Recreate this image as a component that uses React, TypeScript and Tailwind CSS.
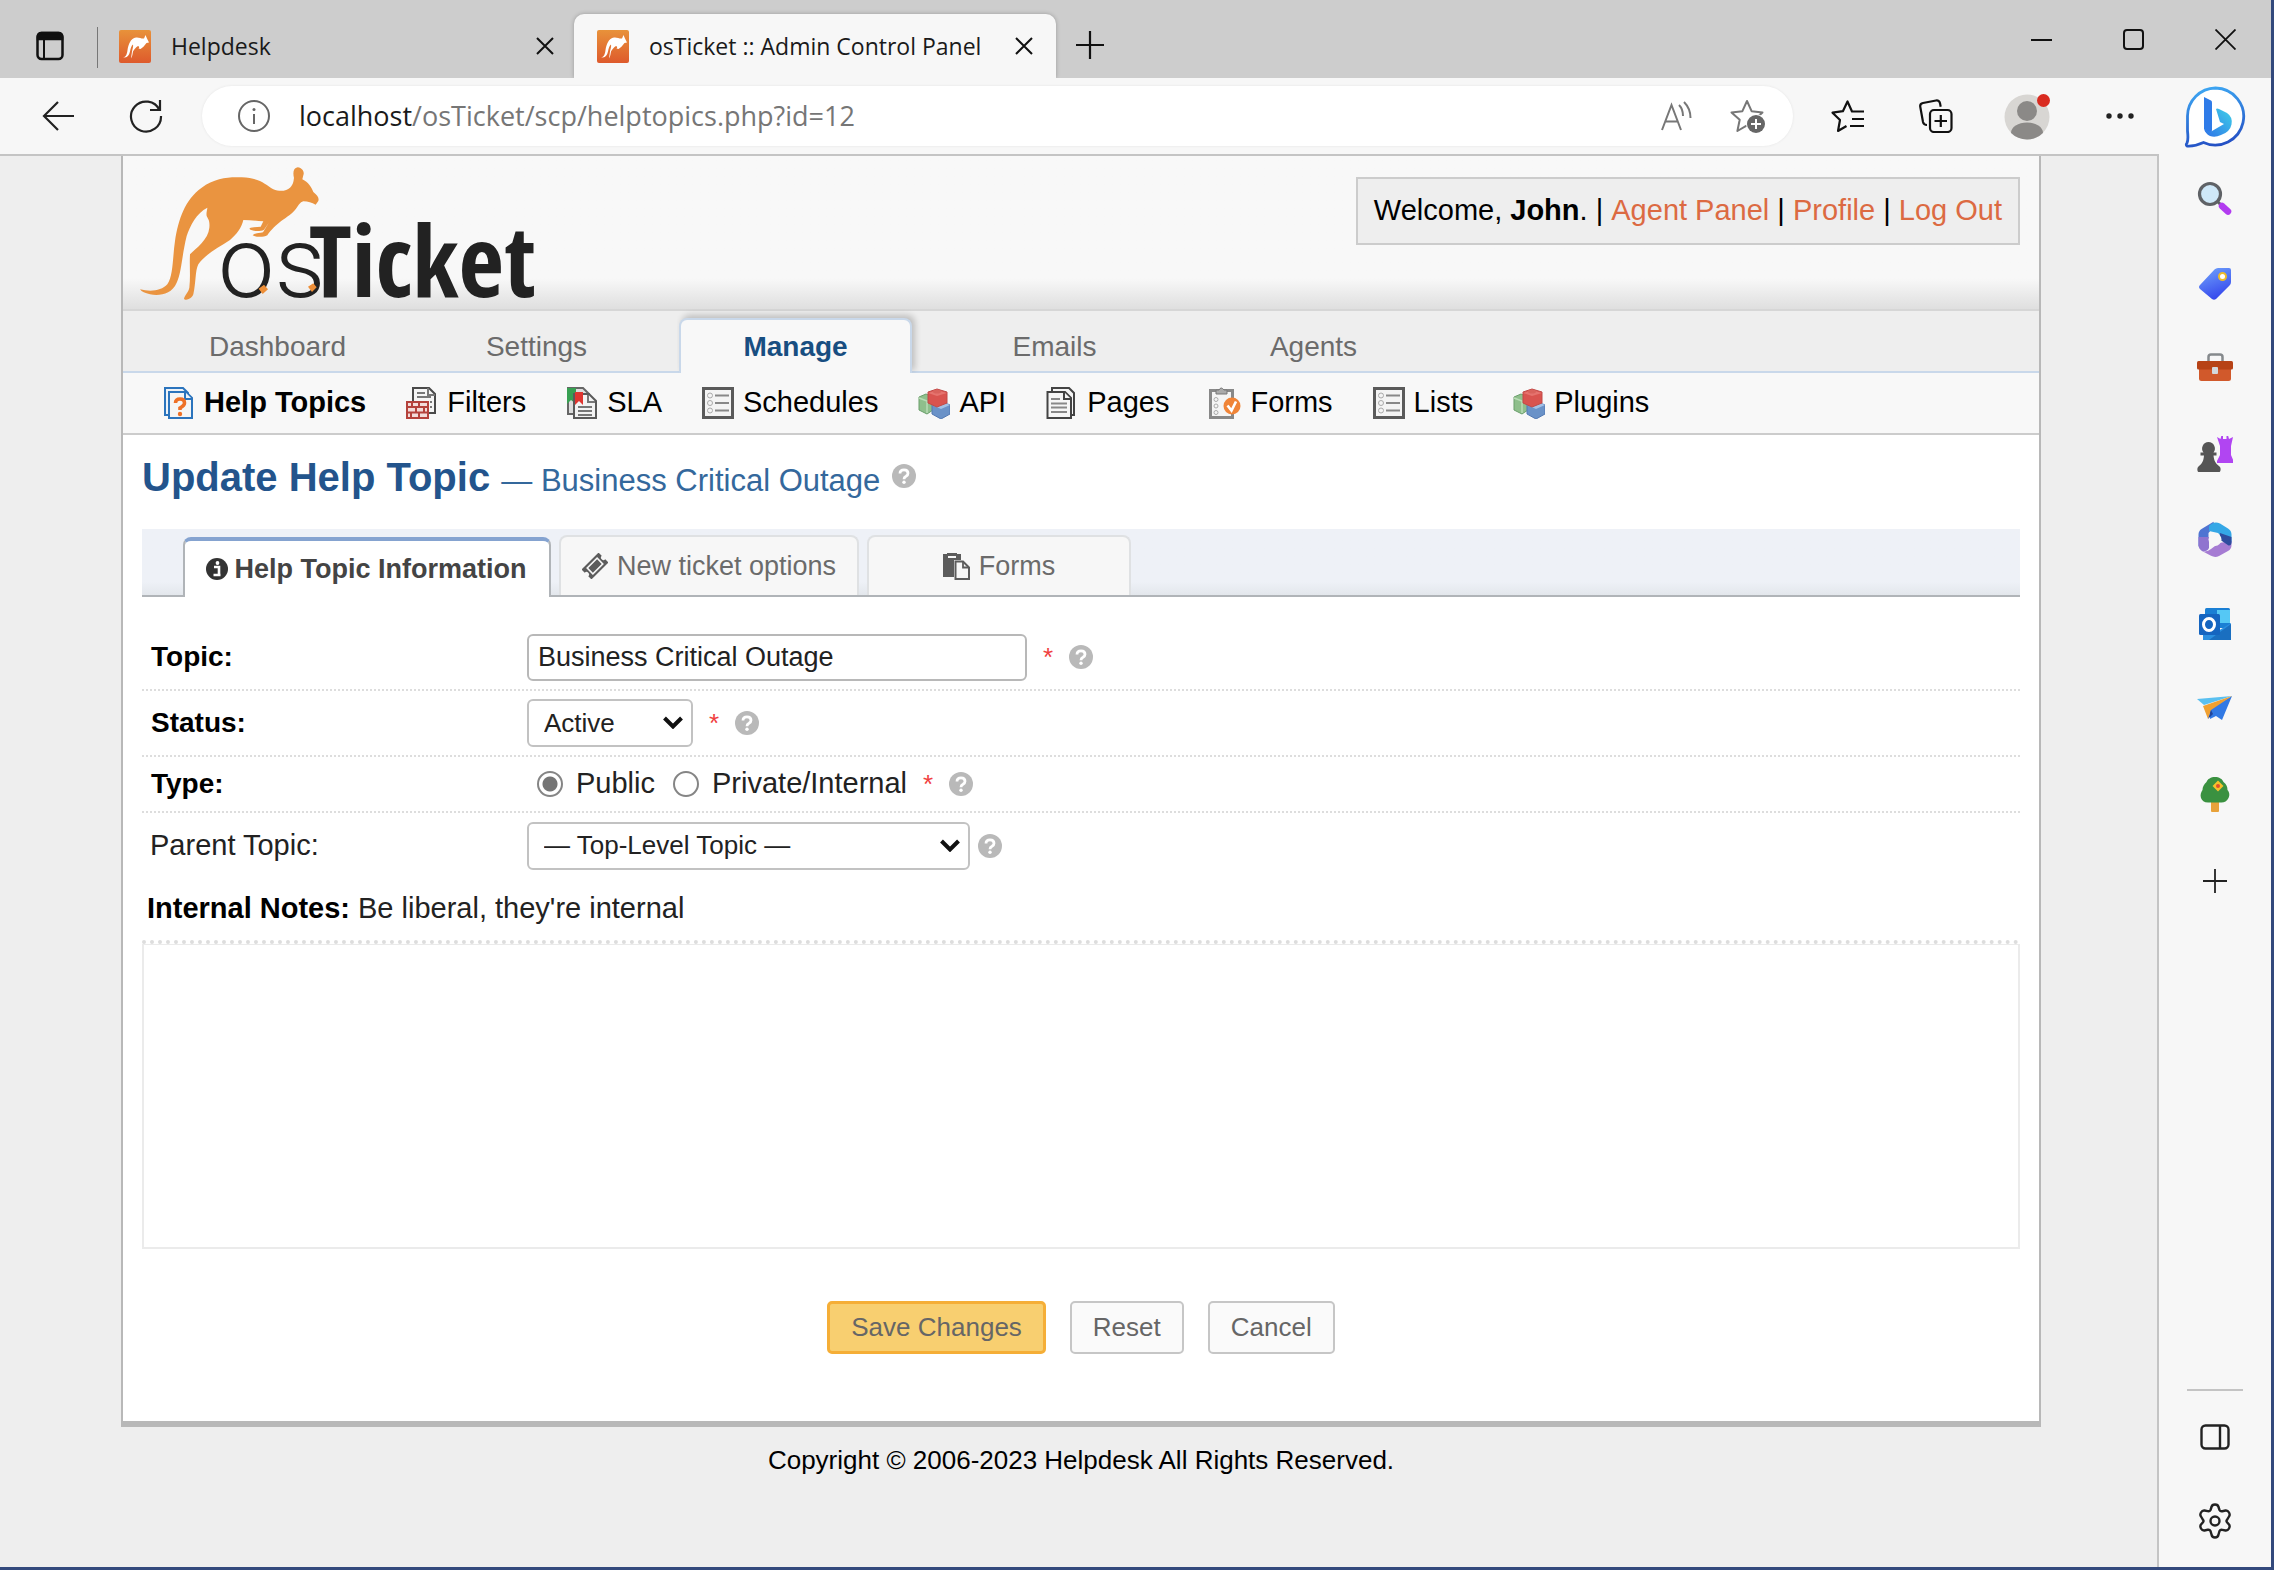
import React from "react";

const ui = "font-['Open_Sans','Noto_Sans',sans-serif]";

function RooTile() {
  return (
    <svg viewBox="0 0 32 33" className="h-[33px] w-8 shrink-0" aria-hidden="true">
      <defs>
        <linearGradient id="tile" x1="0" y1="0" x2="0" y2="1">
          <stop offset="0" stopColor="#e8923a" />
          <stop offset="1" stopColor="#de5a2c" />
        </linearGradient>
      </defs>
      <rect width="32" height="33" rx="2" fill="url(#tile)" />
      <path
        d="M4 27c3 .5 4-3 4.500-7C9.500 14 11.500 8.500 17 7.500c3-.5 5.500 1.500 8 1L26.500 5l1.500 3.500 2 4-2.500.5c-2 2.500-3.500 4.500-6 6l-2-.5c1-1 1-2-.5-2.500-2 1-4 3.500-5 5.500-.5 2-.5 5-2 7l1-7c.5-3 1.500-5 1-7-1.500 1-2.500 4-3 7C10 26 7.500 28.500 4 27z"
        fill="#fff"
      />
    </svg>
  );
}

function CloseX() {
  return (
    <svg viewBox="0 0 18 18" className="h-[18px] w-[18px]" stroke="#111" strokeWidth="2" fill="none">
      <path d="M1 1l16 16M17 1L1 17" />
    </svg>
  );
}

function TabBar() {
  return (
    <div className={`${ui} flex h-[78px] bg-[#cdcdcd] text-[23px] text-[#1a1a1a]`}>
      <button aria-label="Tab actions" className="mt-[14px] flex h-[64px] w-[97px] items-center pl-9">
        <svg viewBox="0 0 28 30" className="h-[30px] w-7" fill="none" stroke="#111" strokeWidth="2.500">
          <rect x="1.500" y="2" width="25" height="26" rx="4" />
          <path d="M2 5a3 3 0 0 1 3-3h18a3 3 0 0 1 3 3v3H2z" fill="#111" />
          <path d="M8 8v20" strokeWidth="2" />
        </svg>
      </button>
      <div className="mt-[27px] h-[41px] w-px bg-[#777]" />
      <div className="mt-[14px] flex h-[64px] w-[476px] items-center pr-[20px] pl-[21px]">
        <RooTile />
        <span className="ml-5 flex-1">Helpdesk</span>
        <button aria-label="Close tab"><CloseX /></button>
      </div>
      <div className="mt-[14px] flex h-[64px] w-[482px] items-center rounded-t-[10px] bg-[#f7f7f7] pr-[23px] pl-[23px] shadow-[0_0_4px_rgba(0,0,0,0.25)] [clip-path:inset(-6px_-6px_0_-6px)]">
        <RooTile />
        <span className="ml-5 flex-1 whitespace-nowrap">osTicket :: Admin Control Panel</span>
        <button aria-label="Close tab"><CloseX /></button>
      </div>
      <button aria-label="New tab" className="ml-[20px] mt-[14px] flex h-[62px] items-center">
        <svg viewBox="0 0 28 28" className="h-7 w-7" stroke="#111" strokeWidth="2.200"><path d="M14 0v28M0 14h28" /></svg>
      </button>
      <div className="ml-auto flex h-[78px] items-center gap-[71px] pr-[35px]">
        <button aria-label="Minimize"><svg viewBox="0 0 21 21" className="h-[21px] w-[21px]" stroke="#111" strokeWidth="2"><path d="M0 11h21" /></svg></button>
        <button aria-label="Maximize"><svg viewBox="0 0 21 21" className="h-[21px] w-[21px]" stroke="#111" strokeWidth="2" fill="none"><rect x="1" y="1" width="19" height="19" rx="3" /></svg></button>
        <button aria-label="Close window"><svg viewBox="0 0 21 21" className="h-[21px] w-[21px]" stroke="#111" strokeWidth="1.800"><path d="M.5.5l20 20M20.500.5l-20 20" /></svg></button>
      </div>
    </div>
  );
}

const STAR = "M17 2l4.600 10.200 10.900 1.200-8.200 7.400L26.600 32 17 26.300 7.400 32l2.300-11.200-8.200-7.400 10.900-1.200z";

function Toolbar() {
  return (
    <div className={`${ui} flex h-[78px] items-center border-b-2 border-[#c4c4c4] bg-[#f7f7f7] pl-[42px]`}>
      <button aria-label="Back">
        <svg viewBox="0 0 32 30" className="h-[30px] w-8" fill="none" stroke="#222" strokeWidth="2.200"><path d="M32 15H2M16 1L2 15l14 14" /></svg>
      </button>
      <button aria-label="Refresh" className="ml-[55px]">
        <svg viewBox="0 0 34 34" className="h-[34px] w-[34px]" fill="none" stroke="#222" strokeWidth="2.200">
          <path d="M30.500 11A15 15 0 1 0 32 17M31 1v10H21" />
        </svg>
      </button>
      <div className="ml-[39px] flex h-[60px] flex-1 items-center rounded-full bg-white pr-[27px] pl-[36px] shadow-[0_0_3px_rgba(0,0,0,0.08)]">
        <svg viewBox="0 0 32 32" className="h-8 w-8" fill="none" stroke="#666" strokeWidth="2">
          <circle cx="16" cy="16" r="15" /><path d="M16 14v10" /><circle cx="16" cy="9.500" r="1.500" fill="#666" stroke="none" />
        </svg>
        <span className="ml-[29px] flex-1 text-[27px] text-[#767676]">
          <span className="text-[#1a1a1a]">localhost</span>/osTicket/scp/helptopics.php?id=12
        </span>
        <button aria-label="Read aloud">
          <svg viewBox="0 0 31 30" className="h-[30px] w-[31px]" fill="none" stroke="#777" strokeWidth="2">
            <path d="M1 29L10.500 4 20 29M4.500 20.500h12M18 4c3 3 4 7 4 11M23 1c4 4 6.500 9 6.500 16" />
          </svg>
        </button>
        <button aria-label="Add to favorites" className="ml-[38px]">
          <svg viewBox="0 0 36 34" className="h-[34px] w-9">
            <path d={STAR} fill="none" stroke="#777" strokeWidth="2" strokeLinejoin="round" />
            <circle cx="26" cy="25" r="10" fill="#fff" /><circle cx="26" cy="25" r="9" fill="#666" />
            <path d="M26 20v10M21 25h10" stroke="#fff" strokeWidth="2" />
          </svg>
        </button>
      </div>
      <button aria-label="Favorites" className="ml-[38px]">
        <svg viewBox="0 0 34 34" className="h-[34px] w-[34px]" fill="none" stroke="#111" strokeWidth="2.200" strokeLinejoin="round">
          <path d="M33 12.500H21L16.500 2.500l-4.600 9.700-10.400 1.500 7.500 7.300L7 32l8.500-5M21 20h12M19 27h14" />
        </svg>
      </button>
      <button aria-label="Collections" className="ml-[54px]">
        <svg viewBox="0 0 34 34" className="h-[34px] w-[34px]" fill="none" stroke="#111" strokeWidth="2.200">
          <path d="M8 26c-2.500 0-3.500-1-4-3L1.300 8c-.4-2 .7-3.600 2.700-4l13-2.500c2-.4 3.600.7 4 2.700l.7 3.500" />
          <rect x="11" y="11" width="21.500" height="22" rx="4" /><path d="M21.800 16v12M15.500 22h12.500" />
        </svg>
      </button>
      <button aria-label="Profile" className="ml-[51px]">
        <svg viewBox="0 0 48 48" className="h-12 w-12">
          <clipPath id="av"><circle cx="23" cy="25" r="22.500" /></clipPath>
          <g clipPath="url(#av)">
            <rect width="48" height="48" fill="#d8d6d3" /><circle cx="23" cy="19" r="10" fill="#8b8987" /><ellipse cx="23" cy="41" rx="16" ry="10.500" fill="#8b8987" />
          </g>
          <circle cx="39.500" cy="8.500" r="6.500" fill="#d92b20" />
        </svg>
      </button>
      <button aria-label="Settings and more" className="mr-[25px] ml-[54px]">
        <svg viewBox="0 0 28 6" className="h-[6px] w-7" fill="#222"><circle cx="3" cy="3" r="2.700" /><circle cx="14" cy="3" r="2.700" /><circle cx="25" cy="3" r="2.700" /></svg>
      </button>
    </div>
  );
}

const sideIcons: { name: string; art: React.ReactNode }[] = [
  { name: "Search", art: (<>
    <circle cx="13" cy="13" r="10.500" fill="#cfe8f8" stroke="#5f6266" strokeWidth="3.200" />
    <path d="M20.500 20.500l4 4" stroke="#5f6266" strokeWidth="3" /><path d="M25 25l6 5.500" stroke="#b23cf0" strokeWidth="6.500" strokeLinecap="round" />
  </>) },
  { name: "Shopping", art: (<>
    <path d="M3 19L17.500 3.500Q19 2 21 2h11q2 0 2 2v12q0 2-1.500 3.500L19 33q-2 1.500-4 0L3 23q-2-2 0-4z" fill="url(#tagFill)" />
    <circle cx="25.500" cy="10.500" r="3.500" fill="#fff" stroke="#edbb2c" strokeWidth="2" />
  </>) },
  { name: "Tools", art: (<>
    <path d="M11.500 11V6q0-2.500 2.500-2.500h9Q25.500 3.500 25.500 6v5" fill="none" stroke="#85898c" strokeWidth="2.500" />
    <rect x="2" y="12" width="32" height="18" rx="2.500" fill="#d1592b" /><rect y="10" width="36" height="8.500" rx="1.500" fill="#b74316" />
    <rect x="15" y="16" width="6" height="7" rx="1" fill="#d3d8dc" />
  </>) },
  { name: "Games", art: (<>
    <path d="M20 1l3.500 2 .8-3h1.700v3h3.500V0h1.700l.8 3L36 1l-2 9v9l2.500 6v2H20v-2l3-6v-9z" fill="#b145f2" />
    <path d="M11.500 6a6.500 6.500 0 0 1 5 10.500h3v3h-3c.5 5 2 8 6 11 1.500 1 1.500 5 0 5.500h-21C0 35.500 0 31.500 1.500 30.500c4-3 5-6 5.500-11H3.500v-3h3A6.500 6.500 0 0 1 11.500 6z" fill="#555" />
  </>) },
  { name: "Microsoft 365", art: (<>
    <path d="M16.500.8L4.500 8Q1.500 10 1.500 13.500V25l4 5 6-4V12l6-7z" fill="#4f74d2" />
    <path d="M12 5q5-5.500 11-2.500l8 5q3.500 2 3.500 6V21q-1 2-2.500 1.500L21 12l-9-2z" fill="#35a7e6" />
    <path d="M34.500 20v4q0 4-3.500 6l-9 5q-4 2-8-.2L5 30q5 1.500 9-2l8-6z" fill="#a67cd3" />
    <path d="M34.500 16v6q-.5 3-3 2.500L22 18l1-6z" fill="#2f4c9e" /><path d="M1.500 16v8q0 3.500 3.500 6 5 1 7-3V16z" fill="#8f74cf" />
    <circle cx="18" cy="18.500" r="6.500" fill="#f7f7f7" />
  </>) },
  { name: "Outlook", art: (<>
    <rect x="8" y="2" width="25" height="20" rx="1.500" fill="#1a7fd4" /><rect x="20" y="4" width="13" height="13" fill="#55c8f5" />
    <path d="M6 34V17l15 8 13-8v17z" fill="#2b8fe0" /><path d="M34 18L12 34h22z" fill="#1a6fc0" /><rect x="2" y="8" width="21" height="21" rx="1.500" fill="#1565c0" />
    <ellipse cx="12" cy="18.500" rx="5.500" ry="6" fill="none" stroke="#fff" strokeWidth="3" />
  </>) },
  { name: "Drop", art: (<>
    <path d="M0 8l35-3-28 9z" fill="#5ac0f0" /><path d="M35 5L25 29l-6-4-6 3V18z" fill="#3179e4" /><path d="M35 5L6 15l5 13 3-9z" fill="#f0a030" /><path d="M14 19l-3 9 5-5z" fill="#20449a" />
  </>) },
  { name: "E-tree", art: (<>
    <rect x="14" y="24" width="8" height="12" rx="1" fill="#e8a23a" />
    <path d="M18 1c4 0 7.500 2 8.500 5 3 2 4 5 4 8 2.500 3 2 6 1 8-1.500 3-4 4.500-7 4.500H11c-4 0-6-2-7-4.500-1-3 0-6 1.500-8 0-3 1.500-6 4-8C10.500 3 14 1 18 1z" fill="#3a9140" />
    <path d="M21 4.500l5.500 5.500-5.500 5.500-5.500-5.500z" fill="#f5c02c" /><circle cx="21" cy="10" r="2" fill="#e0502c" />
  </>) },
];

function Sidebar() {
  return (
    <aside className="flex w-[112px] shrink-0 flex-col items-center bg-[#f7f7f7] pt-[8px]">
      <button aria-label="Bing">
        <svg viewBox="0 0 62 62" className="h-[62px] w-[62px]">
          <defs>
            <linearGradient id="bing" x1="0.300" y1="0" x2="0.500" y2="1"><stop offset="0" stopColor="#3da6f2" /><stop offset="1" stopColor="#2450c4" /></linearGradient>
            <linearGradient id="bingB" x1="0" y1="1" x2="1" y2="0"><stop offset="0" stopColor="#2f74e8" /><stop offset="1" stopColor="#3fd0e8" /></linearGradient>
            <linearGradient id="tagFill" x1="0.200" y1="0" x2="0.600" y2="1"><stop offset="0" stopColor="#6ea0fb" /><stop offset="1" stopColor="#3344ec" /></linearGradient>
          </defs>
          <path d="M31.500 2a28.500 28.500 0 1 1-12 54.500Q11 60.500 3 60q-1.500-1 0-3 1.500-3 .5-12V30A28.500 28.500 0 0 1 31.500 2z" fill="#fff" stroke="url(#bing)" strokeWidth="2.800" />
          <path d="M20 11l7 3.500q1 .5 1 2v27q0 4-3.500 4t-4.500-5z" fill="#2f7be8" />
          <path d="M32 23q1-1 3 0l8 4q6 4 4.500 11.500T37 49q-6 3-11 1-5-2-5-8 2 5 7 3l12-7-4-2z" fill="url(#bingB)" />
        </svg>
      </button>
      <div className="mt-[33px] flex flex-col gap-[49px]">
        {sideIcons.map((i) => (
          <button key={i.name} aria-label={i.name}><svg viewBox="0 0 36 36" className="h-9 w-9">{i.art}</svg></button>
        ))}
        <button aria-label="Customize" className="flex h-10 items-center justify-center">
          <svg viewBox="0 0 24 24" className="h-6 w-6" stroke="#222" strokeWidth="1.800"><path d="M12 0v24M0 12h24" /></svg>
        </button>
      </div>
      <div className="mt-auto h-[2px] w-14 bg-[#c4c4c4]" />
      <button aria-label="Toggle sidebar" className="mt-[33px]">
        <svg viewBox="0 0 30 26" className="h-[26px] w-[30px]" fill="none" stroke="#222" strokeWidth="2.400"><rect x="1.500" y="1.500" width="27" height="23" rx="4" /><path d="M20 1.500v23" /></svg>
      </button>
      <button aria-label="Sidebar settings" className="mt-[53px] mb-[28px]">
        <svg viewBox="0 0 36 36" className="h-9 w-9" fill="none" stroke="#222" strokeWidth="2.400" strokeLinejoin="round">
          <path d="M14.500 4Q15 1.500 18 1.500T21.500 4l1 3q.8 1.600 2.800 1.200l3.200-.7q2.200-.3 3.500 2t0 4L30 16.800q-1 1.200 0 2.400l2 2.300q1.300 1.700 0 4t-3.500 2l-3.200-.7q-2-.4-2.800 1.200l-1 3.500q-.5 3-3.500 3t-3.500-3l-1-3.500q-.8-1.600-2.800-1.200l-3.200.7q-2.200.3-3.500-2t0-4l2-2.300q1-1.200 0-2.400l-2-3.300q-1.300-1.700 0-4t3.500-2l3.200.7q2 .4 2.800-1.200z" />
          <circle cx="18" cy="18" r="4.500" />
        </svg>
      </button>
    </aside>
  );
}

function Logo() {
  return (
    <svg viewBox="0 0 1260 465" className="h-[155px] w-[420px] overflow-visible" role="img" aria-label="osTicket">
      <path
        d="M30 400C60 408 95 405 112 385C130 360 128 300 135 255C145 190 165 130 215 95C255 65 300 62 335 64C390 66 405 85 430 100C450 108 470 105 480 95C492 82 490 75 492 66C488 50 490 36 503 34C518 36 524 48 520 58L517 70C535 78 545 95 550 108C562 118 568 125 565 135L557 146C545 140 535 136 520 136C510 138 505 150 495 162C480 180 465 185 450 198C430 215 420 225 412 238C400 244 380 244 368 238C372 231 388 232 399 229L416 201L402 221C390 228 365 226 358 218C365 212 380 214 392 212L400 196C380 194 360 192 340 192C335 215 320 235 300 252C265 275 225 295 205 325C195 345 198 380 190 415C185 430 165 435 162 428C165 415 175 410 178 395C182 360 178 330 180 295C200 275 235 250 238 215C240 195 235 190 230 180C228 170 232 160 232 155C200 170 180 210 170 240C155 300 155 350 140 380C125 415 90 420 60 415C45 410 35 408 30 400Z"
        fill="#ea9440"
      />
      <text y="422" fill="#222" className="font-['Roboto',sans-serif]">
        <tspan x="264" fontSize="302" fontWeight="300">os</tspan>
        <tspan x="537" fontSize="296" fontWeight="700" className="font-['Liberation_Sans_Narrow','Open_Sans_Condensed',sans-serif]">Ticket</tspan>
      </text>
      <path d="M386 398l16-12 12 14-16 14zM534 392l16-10 10 12-14 14z" fill="#ee8f38" />
    </svg>
  );
}

function SubIcon({ kind }: { kind: string }) {
  let art: React.ReactNode;
  if (kind === "help")
    art = (<g fill="#eef3f8" stroke="#2b74bd" strokeWidth="2"><path d="M2 1h18l5 5v22H2z" /><path d="M6 5h17l6 6v20H6z" fill="#f5f5f5" /><path d="M22 5v7h7" /><path d="M12.500 16q0-4 4.500-4t4.500 4q0 2.500-4.500 5v2" fill="none" stroke="#ee7026" strokeWidth="3.600" /><circle cx="17" cy="27" r="2.200" fill="#ee7026" stroke="none" /></g>);
  else if (kind === "filters")
    art = (<><path d="M7 1h16l6 6v19H7z" fill="#f5f5f5" stroke="#4a4a4a" strokeWidth="2" /><path d="M22 1v7h7M11 6h8M11 10h14M24 15h2M24 20h2" stroke="#777" strokeWidth="2" fill="none" /><rect x="1" y="15" width="21" height="16" fill="#f3dcda" stroke="#b5423c" strokeWidth="2" /><path d="M2 20h19M2 25.500h19M6 15v5M13 15v5M18 20v5M10 20v5M5 26v5M13 26v5" stroke="#b5423c" strokeWidth="2" /></>);
  else if (kind === "sla")
    art = (<><path d="M2 1h15l6 6v20H2z" fill="#ddd" stroke="#666" strokeWidth="2" /><path d="M1 1h9v16L5 13l-4 4z" fill="#37a052" /><path d="M8 7h15l7 7v17H8z" fill="#f3f3f3" stroke="#5a5a5a" strokeWidth="2" /><path d="M12 20h14M12 24h14M12 28h14M22 8v7h7" stroke="#777" strokeWidth="2" fill="none" /><path d="M9 5h8v13l-4-4-4 4z" fill="#df3530" /></>);
  else if (kind === "list")
    art = (<><rect x="1.500" y="1.500" width="29" height="29" fill="#f4f4f4" stroke="#5a5a5a" strokeWidth="3" /><g fill="none" stroke="#aaa"><circle cx="8" cy="8.500" r="2.500" /><circle cx="8" cy="16" r="2.500" /><circle cx="8" cy="23.500" r="2.500" /></g><path d="M13 8.500h14M13 16h14M13 23.500h14" stroke="#888" strokeWidth="2.200" /></>);
  else if (kind === "blocks")
    art = (<><path d="M1 10l7-3 7 3v13l-6 4-8-4z" fill="#8fbf8c" stroke="#6a9f6b" /><path d="M1 11l8 3v12" fill="none" stroke="#b9dcb5" strokeWidth="1.500" /><path d="M14 18l9-4 9 4v9l-9 5-9-5z" fill="#6a92c8" stroke="#5279b2" /><path d="M14 18l9 4 9-4-9-4z" fill="#a3c1e6" /><path d="M10 5l9-3 10 3v11l-10 4-9-4z" fill="#d9534f" stroke="#c04a48" /><path d="M10 6l9 3 10-3-10-3z" fill="#e5736e" /><ellipse cx="19" cy="4.500" rx="4" ry="2" fill="#d9625c" /></>);
  else if (kind === "pages")
    art = (<g fill="#f6f6f6" stroke="#444" strokeWidth="2"><path d="M6 1h17l5 5v22H6z" /><path d="M1.500 5H19l6 6v20H1.500z" /><path d="M18 5v7h7" /><path d="M5 12h9M5 16.500h16M5 20.500h16M5 25h16" stroke="#888" strokeWidth="1.800" /></g>);
  else
    art = (<><path d="M1.500 3.500h22v27h-22z" fill="#f4f4f4" stroke="#888" strokeWidth="3" /><path d="M7 7V3h3q2-4 5 0h3v4z" fill="#aaa" stroke="#777" /><g fill="none" stroke="#aaa"><circle cx="7" cy="12.500" r="2" /><circle cx="7" cy="19" r="2" /><circle cx="7" cy="25.500" r="2" /></g><circle cx="23" cy="19" r="8.500" fill="#f08437" /><path d="M18.500 18.500l4 5 4.500-9" fill="none" stroke="#fff" strokeWidth="2.600" /></>);
  return <svg viewBox="0 0 32 32" className="h-8 w-8 shrink-0" aria-hidden="true">{art}</svg>;
}

const subNav = [
  ["help", "Help Topics"], ["filters", "Filters"], ["sla", "SLA"], ["list", "Schedules"], ["blocks", "API"],
  ["pages", "Pages"], ["forms", "Forms"], ["list", "Lists"], ["blocks", "Plugins"],
];

function Help() {
  return (
    <button aria-label="Help" className="shrink-0">
      <svg viewBox="0 0 24 24" className="h-6 w-6">
        <circle cx="12" cy="12" r="12" fill="#b9b9b9" />
        <path d="M8 9.500Q8 5.800 12 5.800t4 3.400q0 1.800-2 3-2 1-2 3" fill="none" stroke="#fff" strokeWidth="2.800" />
        <circle cx="12" cy="18.300" r="1.700" fill="#fff" />
      </svg>
    </button>
  );
}

function Star() {
  return <span className="text-[26px] leading-8 text-[#f04040]">*</span>;
}

function Select({ id, value, width }: { id: string; value: string; width: string }) {
  return (
    <div className={`relative ${width}`}>
      <select id={id} defaultValue={value} className="block h-12 w-full appearance-none rounded-[6px] border-2 border-[#c2c2c2] bg-white pl-[15px] text-[26px] text-[#222]">
        <option>{value}</option>
      </select>
      <svg viewBox="0 0 20 13" className="pointer-events-none absolute top-[17px] right-[10px] h-[13px] w-5" fill="none" stroke="#111" strokeWidth="4"><path d="M1.500 2L10 10.500 18.500 2" /></svg>
    </div>
  );
}

function Radio({ id, checked }: { id: string; checked?: boolean }) {
  return (
    <input
      type="radio" name="type" id={id} defaultChecked={checked}
      className="h-[26px] w-[26px] appearance-none rounded-full border-2 border-[#858585] bg-white checked:bg-[radial-gradient(circle,#757575_0_7px,#fff_8px)]"
    />
  );
}

const row = "flex items-center border-b-2 border-dotted border-[#ddd] pl-[9px]";
const label = "w-[376px] text-[28px] font-bold";
const tab = "flex items-center justify-center rounded-t-[8px] border-2 border-b-0 border-[#dfe1e3] bg-[#f7f7f7] text-[#6b6b6b]";

export default function App() {
  return (
    <div className="flex min-h-screen flex-col border-r-[3px] border-b-[3px] border-[#33497c] bg-[#eee] font-['Liberation_Sans',Arial,sans-serif] text-black">
      <TabBar />
      <div className="flex flex-1">
        <div className="flex min-w-0 flex-1 flex-col">
          <Toolbar />
          <div className="flex flex-1 flex-col border-r-2 border-[#c4c4c4] pr-[116px] pl-[121px]">
            <div className="border-x-2 border-b-[6px] border-[#b8b8b8] bg-white">
              <header className="flex h-[155px] items-start justify-between border-b-2 border-[#d6d6d6] bg-linear-to-b from-[#f8f8f8] from-80% to-[#dfdfdf] pr-[19px] pl-[7px]">
                <Logo />
                <div className="mt-[21px] flex h-[68px] items-center border-2 border-[#ccc] bg-[#eee] px-4 text-[29px] whitespace-pre">
                  Welcome, <b>John</b>. | <a href="#agent" className="text-[#dc6a42]">Agent Panel</a> | <a href="#profile" className="text-[#dc6a42]">Profile</a> | <a href="#logout" className="text-[#dc6a42]">Log Out</a>
                </div>
              </header>
              <nav className="flex h-[62px] items-end gap-[26px] border-b-2 border-[#c9d8ea] bg-[#eee] pl-[38px] text-[28px] text-[#6b6b6b]">
                {["Dashboard", "Settings", "Manage", "Emails", "Agents"].map((t) => (
                  <a key={t} href={`#${t}`} className={t === "Manage"
                    ? "-mb-[2px] flex h-[55px] w-[233px] items-center justify-center rounded-t-[8px] border-2 border-b-0 border-[#c9d8ea] bg-[#f8f8f8] font-bold text-[#184e81] shadow-[3px_-3px_6px_rgba(0,0,0,0.2)] [clip-path:inset(-12px_-12px_0_-2px)]"
                    : "flex h-[49px] w-[233px] items-center justify-center"}>{t}</a>
                ))}
              </nav>
              <nav className="flex h-[62px] items-center gap-[40px] border-b-2 border-[#ccc] bg-[#f8f8f8] pl-[40px] text-[29px]">
                {subNav.map(([k, t], i) => (
                  <a key={t} href={`#${t}`} className={i === 0 ? "flex items-center gap-[9px] font-bold" : "flex items-center gap-[9px]"}>
                    <SubIcon kind={k} />{t}
                  </a>
                ))}
              </nav>
              <main className="px-[19px]">
                <div className="flex h-[94px] items-start gap-2 pt-[19px]">
                  <h1 className="text-[40px] leading-[46px] font-bold text-[#23548c]">
                    Update Help Topic <small className="text-[31px] font-normal text-[#34689c]">— Business Critical Outage</small>
                  </h1>
                  <div className="pt-[10px] pl-1 leading-none"><Help /></div>
                </div>
                <div className="flex h-[68px] items-end border-b-2 border-[#b0b4b8] bg-linear-to-b from-[#eef1f7] from-80% to-[#e3e7ec] pl-[41px] text-[27px]">
                  <button className="-mb-[2px] flex h-[60px] w-[368px] items-center justify-center gap-[7px] rounded-t-[8px] border-2 border-t-4 border-b-0 border-[#b0b4b8] border-t-[#85a3d0] bg-white pr-[2px] font-bold text-[#444]">
                    <svg viewBox="0 0 22 22" className="h-[22px] w-[22px]"><circle cx="11" cy="11" r="11" fill="#333" /><path d="M8 9h5v7M7.500 17h7" stroke="#fff" strokeWidth="2.600" fill="none" /><circle cx="11.500" cy="5" r="1.900" fill="#fff" /></svg>
                    Help Topic Information
                  </button>
                  <button className={`${tab} ml-[8px] h-[60px] w-[300px] gap-[9px]`}>
                    <svg viewBox="0 0 26 26" className="h-[26px] w-[26px]"><g transform="rotate(-45 13 13)"><path d="M1 6h24v4.500a2.500 2.500 0 0 0 0 5V20H1v-4.500a2.500 2.500 0 0 0 0-5z" fill="#5c5c5c" /><rect x="6" y="9" width="14" height="8" fill="none" stroke="#f7f7f7" strokeWidth="1.600" /></g></svg>
                    New ticket options
                  </button>
                  <button className={`${tab} ml-[8px] h-[60px] w-[264px] gap-[9px]`}>
                    <svg viewBox="0 0 27 27" className="h-[27px] w-[27px]"><path d="M0 1h4V0h10v1h4v6h-7v17H0z" fill="#5c5c5c" /><path d="M5 4h8" stroke="#f7f7f7" strokeWidth="2" /><path d="M12.500 8.500H20l6 6V26H12.500z" fill="#f7f7f7" stroke="#5c5c5c" strokeWidth="2" /><path d="M20 8.500v6h6" fill="none" stroke="#5c5c5c" strokeWidth="1.800" /></svg>
                    Forms
                  </button>
                </div>
                <form className="pt-[28px] text-[29px]">
                  <div className={`${row} h-[66px]`}>
                    <label htmlFor="topic" className={label}>Topic:</label>
                    <input id="topic" defaultValue="Business Critical Outage" className="mr-4 h-[47px] w-[500px] rounded-[6px] border-2 border-[#b8b8b8] pl-[9px] text-[27px] text-[#222]" />
                    <Star /><span className="ml-[16px] flex"><Help /></span>
                  </div>
                  <div className={`${row} h-[66px]`}>
                    <label htmlFor="status" className={label}>Status:</label>
                    <Select id="status" value="Active" width="mr-4 w-[166px]" />
                    <Star /><span className="ml-[16px] flex"><Help /></span>
                  </div>
                  <div className={`${row} h-[56px] text-[#222]`}>
                    <span className={`${label} text-black`}>Type:</span>
                    <span className="flex items-center pl-[10px]">
                      <Radio id="public" checked /><label htmlFor="public" className="mr-[18px] ml-[13px]">Public</label>
                      <Radio id="private" /><label htmlFor="private" className="mr-[16px] ml-[13px]">Private/Internal</label>
                    </span>
                    <Star /><span className="ml-[16px] flex"><Help /></span>
                  </div>
                  <div className="flex h-[65px] items-center pl-[8px]">
                    <label htmlFor="parent" className="w-[377px] text-[#222]">Parent Topic:</label>
                    <Select id="parent" value="— Top-Level Topic —" width="mr-2 w-[443px]" />
                    <Help />
                  </div>
                  <label htmlFor="notes" className="flex h-[66px] items-center gap-2 border-b-4 border-dotted border-[#ddd] pl-[5px] text-[#222]">
                    <b className="text-black">Internal Notes:</b> Be liberal, they're internal
                  </label>
                  <textarea id="notes" className="block h-[305px] w-full resize-none border-2 border-t border-[#ebebeb] bg-white" />
                  <div className="flex justify-center gap-6 pt-[52px] pb-[67px] text-[26px] text-[#666]">
                    <button type="submit" className="h-[53px] rounded-[5px] border-[3px] border-[#f5ae37] bg-[#f8cf70] px-[21px]">Save Changes</button>
                    <button type="reset" className="h-[53px] rounded-[5px] border-2 border-[#c6c6c6] bg-[#fafafa] px-[21px]">Reset</button>
                    <button type="button" className="h-[53px] rounded-[5px] border-2 border-[#c6c6c6] bg-[#fafafa] px-[21px]">Cancel</button>
                  </div>
                </form>
              </main>
            </div>
            <footer className="pt-[17px] text-center text-[26px] leading-[32px]">Copyright © 2006-2023 Helpdesk All Rights Reserved.</footer>
          </div>
        </div>
        <Sidebar />
      </div>
    </div>
  );
}
